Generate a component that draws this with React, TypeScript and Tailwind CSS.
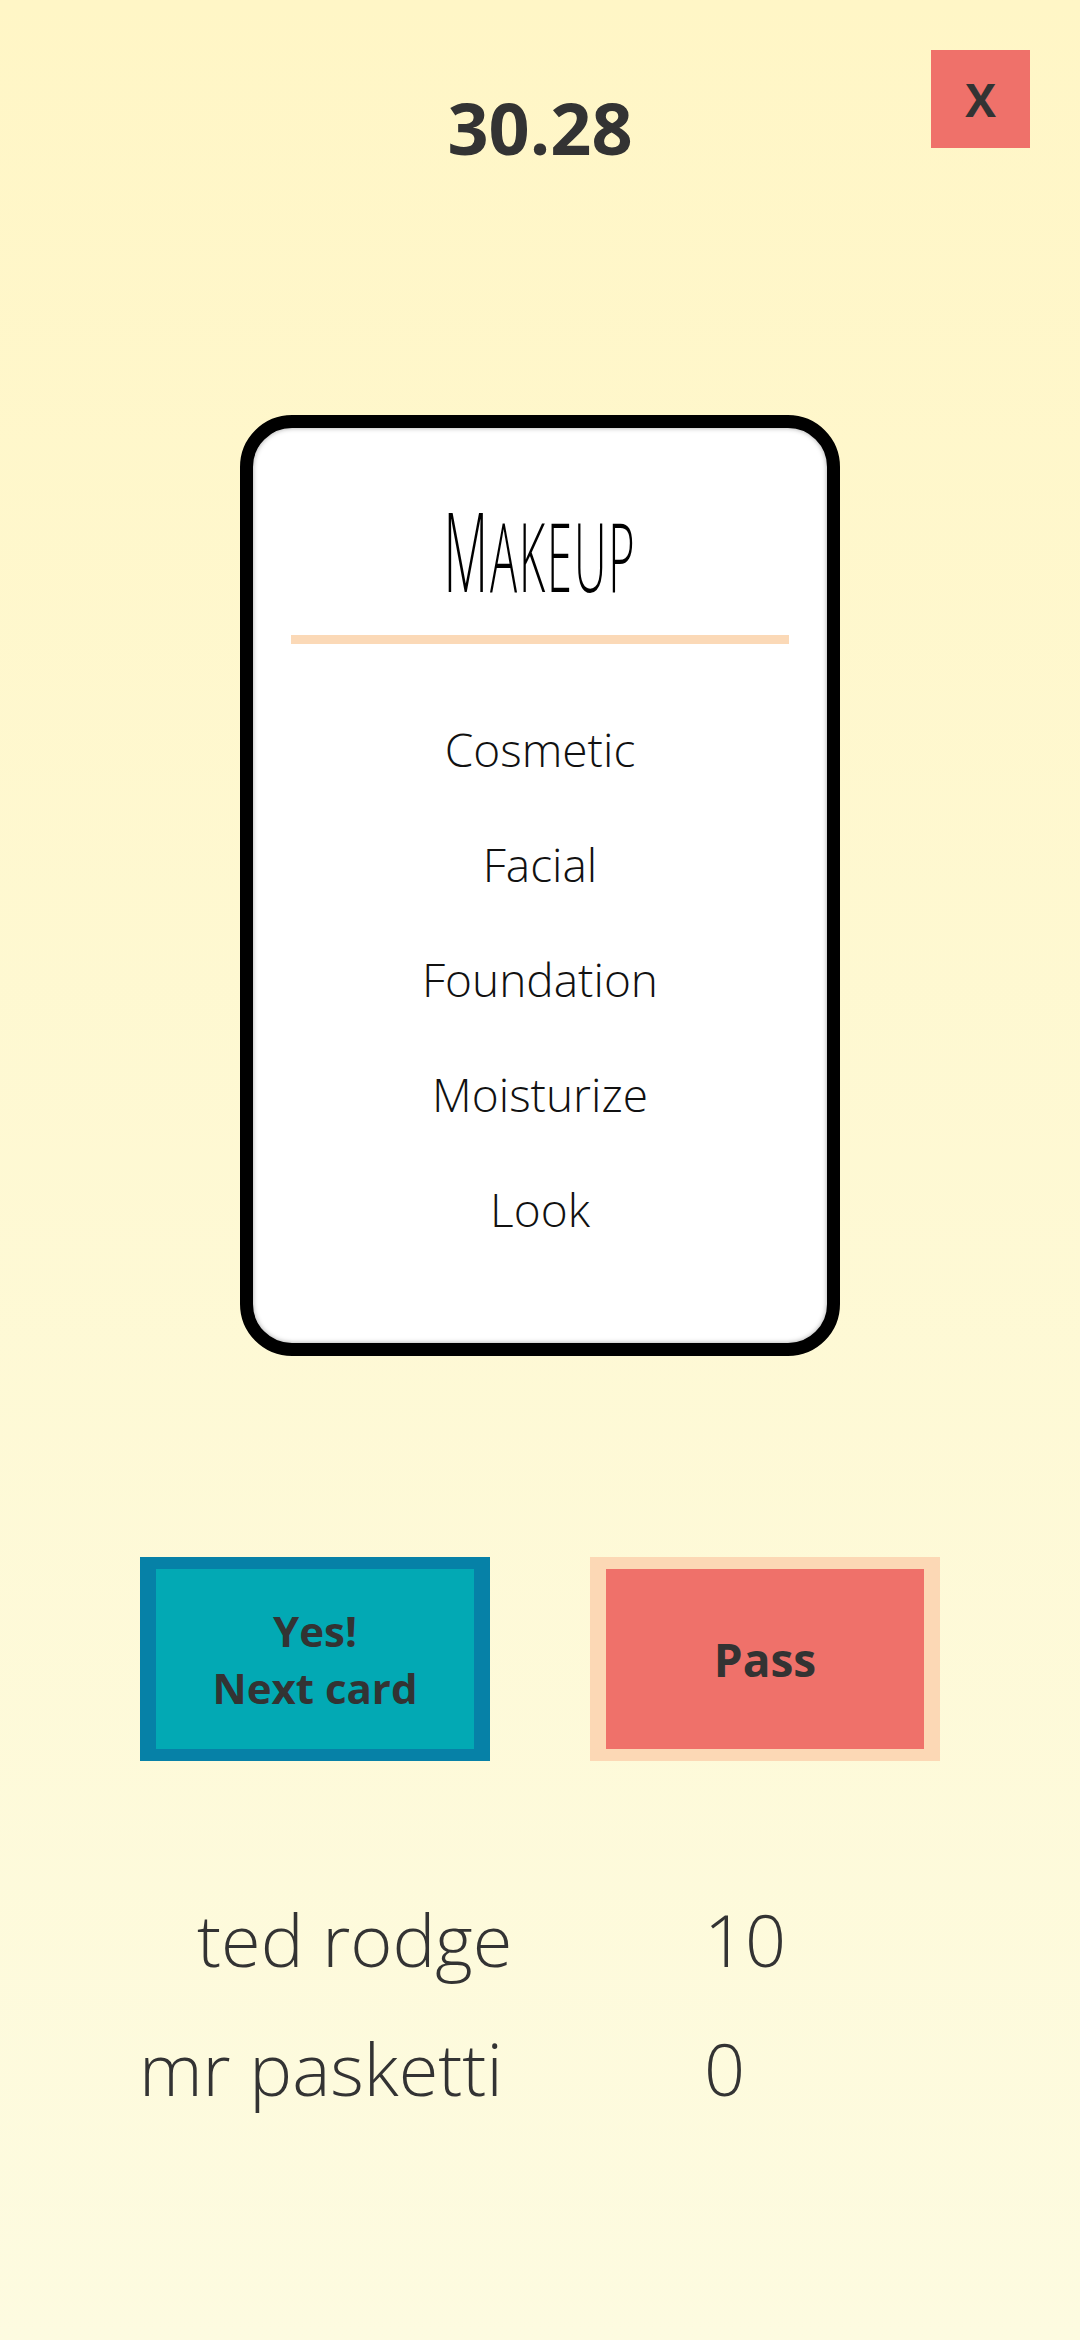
import React from "react";

const words = ["Cosmetic", "Facial", "Foundation", "Moisturize", "Look"];

const players = [
  { name: "ted rodge", score: 10, indent: "pl-[58px]" },
  { name: "mr pasketti", score: 0, indent: "pl-0" },
];

const font = { fontFamily: '"Open Sans", "Liberation Sans", sans-serif' };

const App: React.FC = () => {
  return (
    <div
      className="min-h-screen w-full bg-linear-to-b from-[#fff6c6] to-[#fdfbe0] text-[#333333]"
      style={font}
    >
      {/* Header: timer + close */}
      <div className="grid grid-cols-[1fr_auto_1fr] items-start px-[50px] pt-[50px]">
        <div />
        <div className="mt-[41px] text-[72px] font-bold leading-none">30.28</div>
        <div className="flex justify-end">
          <button className="flex h-[98px] w-[99px] items-center justify-center bg-[#ef716a] text-[46px] font-bold leading-none text-[#333333]">
            X
          </button>
        </div>
      </div>

      {/* Card */}
      <div className="mx-auto mt-[252px] w-[600px] rounded-[52px] border-[13px] border-black bg-white shadow-[inset_0_0_5px_rgba(0,0,0,0.35)]">
        <div className="pt-[66px] text-center text-black">
          <div className="h-[110px] origin-center scale-x-[0.47] text-[110px] font-light leading-none tracking-[4px]">
            M<span className="text-[96px]">AKEUP</span>
          </div>
        </div>
        <div className="mx-[38px] mt-[31px] h-[9px] bg-[#fbd9b7]" />
        <div className="mt-[48px] flex flex-col pb-[76px]">
          {words.map((w) => (
            <div key={w} className="h-[115px] text-center text-[46px] font-light leading-[115px] text-[#111111]">
              {w}
            </div>
          ))}
        </div>
      </div>

      {/* Buttons */}
      <div className="mt-[201px] flex justify-between px-[140px]">
        <button className="flex h-[204px] w-[350px] flex-col items-center justify-center border-x-[16px] border-y-[12px] border-[#0681a7] bg-[#02a9b4] text-[42px] font-bold leading-[57px] text-[#333333]">
          <span>Yes!</span>
          <span>Next card</span>
        </button>
        <button className="flex h-[204px] w-[350px] items-center justify-center border-x-[16px] border-y-[12px] border-[#fcd8b5] bg-[#ef716a] text-[46px] font-bold text-[#333333]">
          Pass
        </button>
      </div>

      {/* Scores */}
      <div className="mt-[114px] pb-[120px]">
        {players.map((p) => (
          <div key={p.name} className="flex h-[129px] text-[72px] font-light leading-[129px] text-[#333333]">
            <div className={`ml-[139px] w-[565px] ${p.indent}`}>{p.name}</div>
            <div>{p.score}</div>
          </div>
        ))}
      </div>
    </div>
  );
};

export default App;
